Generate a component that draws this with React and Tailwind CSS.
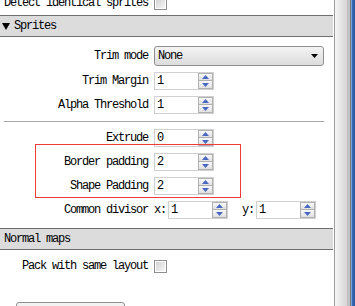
import React from "react";

function Arrow({ up }) {
  return (
    <svg width="7" height="4" viewBox="0 0 7 4" className="block">
      {up ? <polygon points="0,4 7,4 3.5,0" fill="#4a68c0" /> : <polygon points="0,0 7,0 3.5,4" fill="#4a68c0" />}
    </svg>
  );
}

function Spin({ value, className = "" }) {
  return (
    <div className={`flex h-[18px] w-[60px] shrink-0 items-center border border-[#d0d0d0] bg-white ${className}`}>
      <span className="flex-1 pl-[2px] leading-none">{value}</span>
      <div className="flex h-[16px] w-[15px] flex-col">
        <div className="flex h-[8px] items-center justify-center border border-[#b0b0b0] bg-gradient-to-b from-[#f8f8f8] to-[#e0e0e0]">
          <Arrow up />
        </div>
        <div className="flex h-[8px] items-center justify-center border border-t-0 border-[#b0b0b0] bg-gradient-to-b from-[#f8f8f8] to-[#e0e0e0]">
          <Arrow />
        </div>
      </div>
    </div>
  );
}

function Check() {
  return (
    <div className="h-[13px] w-[13px] shrink-0 border border-[#8e8f8f] bg-white p-px">
      <div className="h-full w-full bg-gradient-to-br from-[#d2d2d2] to-[#f7f7f7]" />
    </div>
  );
}

function Row({ label, children, w = "w-[148px]", gap = "ml-[6px]", className = "" }) {
  return (
    <div className={`flex h-[24px] shrink-0 items-center ${className}`}>
      <div className={`${w} shrink-0 whitespace-nowrap text-right`}>{label}</div>
      <div className={`${gap} flex items-center`}>{children}</div>
    </div>
  );
}

function Header({ children }) {
  return (
    <div className="flex h-[22px] w-[333px] shrink-0 items-center border-y border-[#6e6e6e] bg-[#dcdcdc] pl-[2px]">
      {children}
    </div>
  );
}

export default function App() {
  return (
    <div className="flex h-[306px] w-[355px] overflow-hidden bg-white font-mono text-[12px] tracking-[-1.2px] text-black">
      <div className="relative flex w-[334px] shrink-0 flex-col">
        <div className="h-[15px] shrink-0 overflow-hidden">
          <Row label="Detect identical sprites" className="-mt-[9px] h-[17px]">
            <Check />
          </Row>
        </div>
        <Header>
          <svg width="8" height="7" viewBox="0 0 8 7" className="mr-[4px] block">
            <polygon points="0,0 8,0 4,7" fill="#000" />
          </svg>
          <span>Sprites</span>
        </Header>
        <Row label="Trim mode" className="mt-[7px]">
          <div className="flex h-[20px] w-[170px] items-center justify-between rounded-[3px] border border-[#8e8f8f] bg-gradient-to-b from-[#f4f4f4] to-[#dcdcdc] pl-[3px] pr-[5px]">
            <span className="leading-none">None</span>
            <svg width="7" height="4" viewBox="0 0 7 4" className="block">
              <polygon points="0,0 7,0 3.5,4" fill="#000" />
            </svg>
          </div>
        </Row>
        <Row label="Trim Margin" className="mt-[1px]">
          <Spin value="1" />
        </Row>
        <Row label="Alpha Threshold">
          <Spin value="1" />
        </Row>
        <div className="ml-[4px] mt-[4px] h-px w-[320px] shrink-0 bg-[#a8a8a8]" />
        <Row label="Extrude" className="mt-[4px]">
          <Spin value="0" />
        </Row>
        <Row label="Border padding">
          <Spin value="2" />
        </Row>
        <Row label="Shape Padding">
          <Spin value="2" />
        </Row>
        <Row label="Common divisor x:" w="w-[166px]" gap="ml-[2px]">
          <Spin value="1" />
          <span className="ml-[14px] w-[12px]">y:</span>
          <Spin value="1" className="ml-[2px]" />
        </Row>
        <div className="mt-[6px] shrink-0">
          <Header>
            <span className="pl-[2px]">Normal maps</span>
          </Header>
        </div>
        <Row label="Pack with same layout" className="mt-[4px]">
          <Check />
        </Row>
        <div className="ml-[16px] mt-[24px] h-[24px] w-[109px] shrink-0 rounded-[3px] border border-[#8e8f8f] bg-gradient-to-b from-[#f4f4f4] to-[#dcdcdc]" />
        <div className="pointer-events-none absolute left-[35px] top-[144px] h-[54px] w-[206px] border border-[#ee3a3a]" />
      </div>
      <div className="flex h-full w-[21px] shrink-0">
        <div className="w-px bg-[#9c9c9c]" />
        <div className="w-[12px] bg-gradient-to-r from-[#f6f6f6] to-[#d6d6d6]" />
        <div className="w-[3px] bg-[#c2c2c2]" />
        <div className="w-px bg-[#7a7a7a]" />
        <div className="w-px bg-[#7da4da]" />
        <div className="w-[3px] bg-gradient-to-r from-[#3d6db5] to-[#24559e]" />
      </div>
    </div>
  );
}
